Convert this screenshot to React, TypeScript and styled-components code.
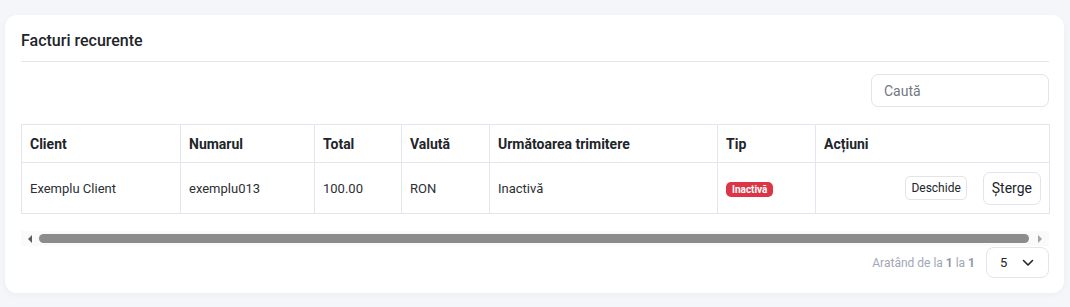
import React from "react";
import styled, { createGlobalStyle } from "styled-components";

const Global = createGlobalStyle`
  html, body { margin: 0; padding: 0; background: #f5f6f9; }
  body { font-family: Roboto, "Noto Sans", Arial, sans-serif; color: #212529; }
  * { box-sizing: border-box; }
`;

const Page = styled.div`
  padding: 15px 6px 15px 5px;
`;

const Card = styled.section`
  background: #fff;
  border-radius: 12px;
  box-shadow: 0 2px 6px rgba(30, 40, 80, 0.04);
  padding: 16px 15px 15px 16px;
`;

const Header = styled.div`
  padding-bottom: 10px;
  border-bottom: 1px solid #e4e5ee;
`;

const Title = styled.h2`
  margin: 0;
  font-size: 16px;
  line-height: 20px;
  font-weight: 500;
  color: #212529;
`;

const Toolbar = styled.div`
  display: flex;
  justify-content: flex-end;
  padding: 12px 0 17px;
`;

const Search = styled.input`
  width: 178px;
  height: 33px;
  border: 1px solid #e2e4ec;
  border-radius: 7px;
  padding: 0 12px;
  font-family: inherit;
  font-size: 14px;
  color: #212529;
  outline: none;
  &::placeholder { color: #737880; }
`;

const TableWrap = styled.div`
  padding-bottom: 17px;
`;

const Table = styled.table`
  width: 100%;
  border-collapse: collapse;
  table-layout: fixed;
  font-size: 13px;
`;

const Th = styled.th`
  height: 38px;
  padding: 0 8px;
  border: 1px solid #e4e5ee;
  text-align: left;
  font-size: 14px;
  font-weight: 700;
  color: #212529;
`;

const Td = styled.td<{ $right?: boolean }>`
  height: 51px;
  padding: 0 8px;
  border: 1px solid #e4e5ee;
  color: #2b2f33;
  text-align: ${(p) => (p.$right ? "right" : "left")};
`;

const Badge = styled.span`
  display: inline-block;
  background: #dc3545;
  color: #fff;
  font-size: 10px;
  font-weight: 700;
  line-height: 15px;
  padding: 0 6px;
  border-radius: 5px;
  transform: translateY(1px);
`;

const Actions = styled.div`
  display: flex;
  justify-content: flex-end;
  align-items: center;
  gap: 16px;
`;

const Button = styled.button<{ $small?: boolean }>`
  background: #fff;
  border: 1px solid #e2e4ec;
  border-radius: ${(p) => (p.$small ? "5px" : "7px")};
  font-family: inherit;
  color: #212529;
  font-size: ${(p) => (p.$small ? "12px" : "14px")};
  height: ${(p) => (p.$small ? "24px" : "33px")};
  padding: 0 ${(p) => (p.$small ? "5px" : "8px")};
  cursor: pointer;
`;

const Scrollbar = styled.div`
  display: flex;
  align-items: center;
  height: 15px;
  background: #fafafa;
`;

const Arrow = styled.div<{ $dir: "left" | "right" }>`
  width: 18px;
  height: 15px;
  display: flex;
  align-items: center;
  justify-content: center;
  &::before {
    content: "";
    border-top: 4px solid transparent;
    border-bottom: 4px solid transparent;
    ${(p) =>
      p.$dir === "left"
        ? "border-right: 4px solid #5c5c5c;"
        : "border-left: 4px solid #a3a3a3;"}
  }
`;

const Thumb = styled.div`
  flex: 1;
  height: 9px;
  background: #8b8b8b;
  border-radius: 5px;
  margin: 0 2px 0 0;
`;

const Footer = styled.div`
  display: flex;
  justify-content: flex-end;
  align-items: center;
  gap: 11px;
  padding-top: 1px;
`;

const Info = styled.span`
  font-size: 12px;
  color: #a2a6b8;
  b { font-weight: 700; color: #9296aa; }
`;

const Select = styled.div`
  width: 63px;
  height: 31px;
  border: 1px solid #e2e4ee;
  border-radius: 8px;
  display: flex;
  align-items: center;
  justify-content: space-between;
  padding: 0 14px 0 13px;
  font-size: 13px;
  color: #212529;
`;

const cols = [159, 134, 87, 88, 228, 98, 234];
const headers = ["Client", "Numarul", "Total", "Valută", "Următoarea trimitere", "Tip", "Acțiuni"];

export default function App() {
  return (
    <>
      <Global />
      <Page>
        <Card>
          <Header>
            <Title>Facturi recurente</Title>
          </Header>
          <Toolbar>
            <Search placeholder="Caută" />
          </Toolbar>
          <TableWrap>
            <Table>
              <colgroup>
                {cols.map((w, i) => (
                  <col key={i} style={{ width: w }} />
                ))}
              </colgroup>
              <thead>
                <tr>
                  {headers.map((h) => (
                    <Th key={h}>{h}</Th>
                  ))}
                </tr>
              </thead>
              <tbody>
                <tr>
                  <Td>Exemplu Client</Td>
                  <Td>exemplu013</Td>
                  <Td>100.00</Td>
                  <Td>RON</Td>
                  <Td>Inactivă</Td>
                  <Td>
                    <Badge>Inactivă</Badge>
                  </Td>
                  <Td $right>
                    <Actions>
                      <Button $small>Deschide</Button>
                      <Button>Șterge</Button>
                    </Actions>
                  </Td>
                </tr>
              </tbody>
            </Table>
          </TableWrap>
          <Scrollbar>
            <Arrow $dir="left" />
            <Thumb />
            <Arrow $dir="right" />
          </Scrollbar>
          <Footer>
            <Info>
              Aratând de la <b>1</b> la <b>1</b>
            </Info>
            <Select>
              <span>5</span>
              <svg width="12" height="8" viewBox="0 0 12 8" fill="none">
                <path d="M1.5 1.5 6 6l4.5-4.5" stroke="#212529" strokeWidth="1.6" strokeLinecap="round" strokeLinejoin="round" />
              </svg>
            </Select>
          </Footer>
        </Card>
      </Page>
    </>
  );
}
